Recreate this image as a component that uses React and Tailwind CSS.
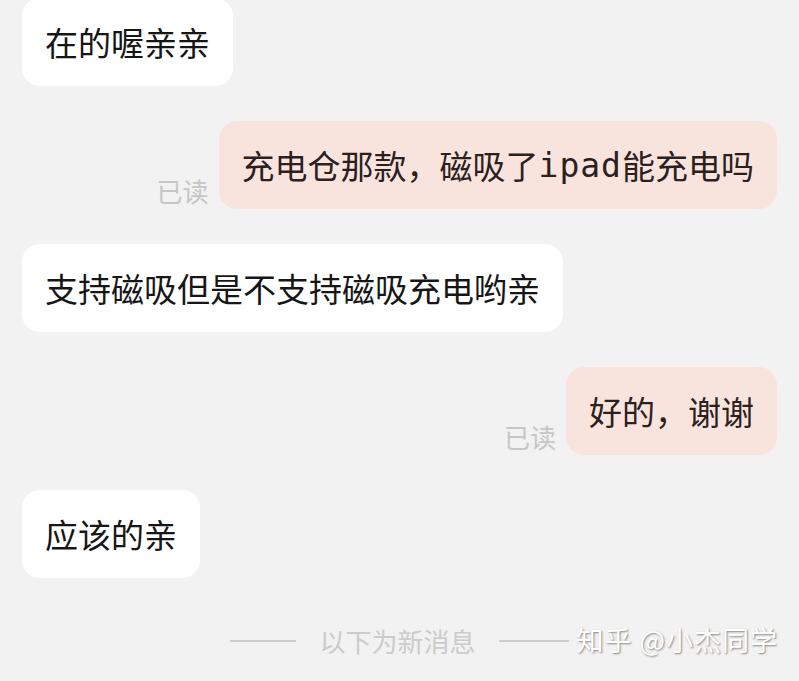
const cjk = { fontFamily: '"Noto Sans CJK SC", "Noto Sans", sans-serif' };

function Left({ children }) {
  return (
    <div className="flex justify-start pl-[22px]">
      <div className="h-[88px] flex items-center px-[23px] rounded-[18px] bg-white text-[33px] text-[#161616] leading-none">
        {children}
      </div>
    </div>
  );
}

function Right({ children }) {
  return (
    <div className="flex justify-end items-end pr-[22px] gap-[10px]">
      <span className="text-[26px] leading-none text-[#c6c6c6] mb-[5px]">已读</span>
      <div className="h-[88px] flex items-center px-[23px] rounded-[18px] bg-[#f9e4dd] text-[33px] text-[#2a211f] leading-none">
        {children}
      </div>
    </div>
  );
}

export default function App() {
  return (
    <div className="w-[799px] h-[681px] overflow-hidden bg-[#f2f2f2]" style={cjk}>
      <div className="flex flex-col gap-[35px] mt-[-2px]">
        <Left>在的喔亲亲</Left>
        <Right>
          充电仓那款，磁吸了
          <span style={{ fontFamily: '"DejaVu Sans Mono", monospace' }} className="text-[33px] tracking-[1px]">ipad</span>
          能充电吗
        </Right>
        <Left>支持磁吸但是不支持磁吸充电哟亲</Left>
        <Right>好的，谢谢</Right>
        <Left>应该的亲</Left>
      </div>
      <div className="relative h-[104px]">
        <div className="flex items-center justify-center pt-[50px] gap-[23px]">
          <div className="w-[66px] h-[2px] bg-[#cdcdcd]" />
          <span className="text-[26px] leading-none text-[#cbcbcb]">以下为新消息</span>
          <div className="w-[70px] h-[2px] bg-[#cdcdcd]" />
        </div>
        <div className="absolute right-[21px] top-[48px] text-[27px] leading-none text-white tracking-[1px] [text-shadow:1px_1px_2px_rgba(0,0,0,0.45)]">
          知乎 @小杰同学
        </div>
      </div>
    </div>
  );
}
